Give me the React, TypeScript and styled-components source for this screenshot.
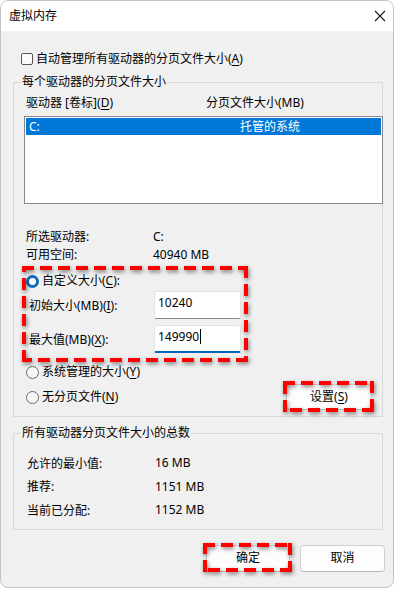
import React from 'react';
import styled, { createGlobalStyle } from 'styled-components';

const GlobalStyle = createGlobalStyle`
  html, body {
    margin: 0;
    padding: 0;
    background: #ffffff;
  }
  body {
    font-family: "Noto Sans", "Noto Sans CJK SC", sans-serif;
    font-size: 12px;
    color: #000000;
  }
`;

const Window = styled.div`
  width: 394px;
  height: 588px;
  box-sizing: border-box;
  border: 1px solid #c4c4c4;
  border-radius: 8px;
  overflow: hidden;
  background: #f0f0f0;
  display: flex;
  flex-direction: column;
`;

const TitleBar = styled.div`
  height: 30px;
  flex-shrink: 0;
  background: #ffffff;
  display: flex;
  align-items: center;
  justify-content: space-between;
  padding: 0 7px 0 8px;
`;

const Title = styled.span`
  font-size: 12px;
  line-height: 16px;
`;

const CloseIcon = styled.svg`
  display: block;
`;

const Content = styled.div`
  padding: 20px 10px 0 12px;
`;

const CheckRow = styled.div`
  display: flex;
  align-items: center;
  gap: 3px;
  height: 16px;
  padding-left: 8px;
  line-height: 16px;
`;

const CheckBox = styled.span`
  width: 12px;
  height: 12px;
  box-sizing: border-box;
  border: 1px solid #555555;
  border-radius: 2px;
  background: #fbfbfb;
`;

const Key = styled.span`
  text-decoration: underline;
  text-underline-offset: 2px;
`;

const Group = styled.fieldset<{ $top: number }>`
  margin: ${({ $top }) => $top}px 0 0 0;
  padding: 0;
  border: 1px solid #d9d9d9;
  min-width: 0;
`;

const Legend = styled.legend`
  margin-left: 7px;
  padding: 0 1px;
  line-height: 16px;
`;

const ColumnHeader = styled.div`
  display: grid;
  grid-template-columns: 180px 1fr;
  margin-top: 5px;
  padding-left: 12px;
  line-height: 16px;
`;

const ListBox = styled.div`
  margin: 5px -1px 0 10px;
  height: 88px;
  box-sizing: border-box;
  border: 1px solid #858991;
  background: #ffffff;
  padding: 1px;
`;

const ListRow = styled.div<{ $selected: boolean }>`
  display: grid;
  grid-template-columns: 211px 1fr;
  height: 17px;
  line-height: 17px;
  padding-left: 3px;
  background: ${({ $selected }) => ($selected ? '#0078d7' : 'transparent')};
  color: ${({ $selected }) => ($selected ? '#ffffff' : '#000000')};
`;

const InfoList = styled.div<{ $top: number; $left: number; $col: number; $row: number }>`
  margin-top: ${({ $top }) => $top}px;
  padding-left: ${({ $left }) => $left}px;
  display: grid;
  grid-template-columns: ${({ $col }) => $col}px 1fr;
  grid-auto-rows: ${({ $row }) => $row}px;
  align-items: center;
`;

const CustomSection = styled.div`
  position: relative;
  margin-top: 10px;
  padding-left: 12px;
`;

const RadioRow = styled.div<{ $top?: number }>`
  display: flex;
  align-items: center;
  gap: 3px;
  height: 16px;
  line-height: 16px;
  margin-top: ${({ $top }) => $top ?? 0}px;
`;

const Radio = styled.span<{ $checked?: boolean }>`
  width: 13px;
  height: 13px;
  box-sizing: border-box;
  border-radius: 50%;
  border: ${({ $checked }) => ($checked ? '3px solid #0f6cbd' : '1px solid #6b6b6b')};
  background: ${({ $checked }) => ($checked ? '#ffffff' : '#f6f6f6')};
`;

const FieldGrid = styled.div`
  display: grid;
  grid-template-columns: 125px 87px;
  row-gap: 6px;
  align-items: center;
  margin-top: 2px;
  padding-left: 3px;
`;

const TextBox = styled.div<{ $focused?: boolean }>`
  height: 28px;
  box-sizing: border-box;
  background: #ffffff;
  border: 1px solid #e3e3e3;
  border-bottom: ${({ $focused }) => ($focused ? '2px solid #0067c0' : '1px solid #8a8a8a')};
  border-radius: 2px;
  padding: 3px 3px 0;
  line-height: 16px;
  font-size: 12px;
`;

const Caret = styled.span`
  display: inline-block;
  width: 1px;
  height: 15px;
  background: #000000;
  vertical-align: -3px;
  margin-left: 1px;
`;

const LastRow = styled.div`
  display: flex;
  align-items: center;
  justify-content: space-between;
  margin-top: 4px;
  padding: 0 10px 6px 12px;
`;

const RadioLine = styled.div`
  display: flex;
  align-items: center;
  gap: 3px;
  line-height: 16px;
`;

const ButtonWrap = styled.div`
  position: relative;
`;

const Button = styled.div<{ $width: number; $height: number }>`
  width: ${({ $width }) => $width}px;
  height: ${({ $height }) => $height}px;
  box-sizing: border-box;
  display: flex;
  align-items: center;
  justify-content: center;
  background: #fdfdfd;
  border: 1px solid #d0d0d0;
  border-bottom-color: #b8b8b8;
  border-radius: 4px;
  line-height: 16px;
`;

const Footer = styled.div`
  display: flex;
  justify-content: flex-end;
  gap: 10px;
  margin: 15px -2px 0 0;
`;

const Frame = styled.svg<{ $left: number; $top: number }>`
  position: absolute;
  left: ${({ $left }) => $left}px;
  top: ${({ $top }) => $top}px;
  overflow: visible;
  pointer-events: none;
  filter: drop-shadow(1px 2px 2px rgba(0, 0, 0, 0.5));
`;

const DashedFrame: React.FC<{ left: number; top: number; w: number; h: number }> = ({ left, top, w, h }) => (
  <Frame $left={left} $top={top} width={w} height={h}>
    <g stroke="#ff0000" strokeWidth={4} strokeDasharray="12 6" fill="none">
      <path d={`M0 2H${w}`} />
      <path d={`M${w - 2} 0V${h}`} />
      <path d={`M${w} ${h - 2}H0`} />
      <path d={`M2 ${h}V0`} />
    </g>
  </Frame>
);

const totals = [
  { label: '允许的最小值:', value: '16 MB' },
  { label: '推荐:', value: '1151 MB' },
  { label: '当前已分配:', value: '1152 MB' },
];

export default function App() {
  return (
    <>
      <GlobalStyle />
      <Window>
        <TitleBar>
          <Title>虚拟内存</Title>
          <CloseIcon width="12" height="12" viewBox="0 0 12 12">
            <path d="M1 1L11 11M11 1L1 11" stroke="#1b1b1b" strokeWidth="1.1" fill="none" />
          </CloseIcon>
        </TitleBar>
        <Content>
          <CheckRow>
            <CheckBox />
            <span>
              自动管理所有驱动器的分页文件大小(<Key>A</Key>)
            </span>
          </CheckRow>

          <Group $top={7}>
            <Legend>每个驱动器的分页文件大小</Legend>
            <ColumnHeader>
              <span>
                驱动器 [卷标](<Key>D</Key>)
              </span>
              <span>分页文件大小(MB)</span>
            </ColumnHeader>
            <ListBox>
              <ListRow $selected>
                <span>C:</span>
                <span>托管的系统</span>
              </ListRow>
            </ListBox>

            <InfoList $top={23} $left={12} $col={127} $row={18}>
              <span>所选驱动器:</span>
              <span>C:</span>
              <span>可用空间:</span>
              <span>40940 MB</span>
            </InfoList>

            <CustomSection>
              <RadioRow>
                <Radio $checked />
                <span>
                  自定义大小(<Key>C</Key>):
                </span>
              </RadioRow>
              <FieldGrid>
                <span>
                  初始大小(MB)(<Key>I</Key>):
                </span>
                <TextBox>10240</TextBox>
                <span>
                  最大值(MB)(<Key>X</Key>):
                </span>
                <TextBox $focused>
                  149990
                  <Caret />
                </TextBox>
              </FieldGrid>
              <DashedFrame left={8} top={-7} w={226} h={96} />
              <RadioRow $top={11}>
                <Radio />
                <span>
                  系统管理的大小(<Key>Y</Key>)
                </span>
              </RadioRow>
            </CustomSection>

            <LastRow>
              <RadioLine>
                <Radio />
                <span>
                  无分页文件(<Key>N</Key>)
                </span>
              </RadioLine>
              <ButtonWrap>
                <Button $width={86} $height={26}>
                  <span>
                    设置(<Key>S</Key>)
                  </span>
                </Button>
                <DashedFrame left={-3} top={-3} w={91} h={31} />
              </ButtonWrap>
            </LastRow>
          </Group>

          <Group $top={8}>
            <Legend>所有驱动器分页文件大小的总数</Legend>
            <InfoList $top={10} $left={13} $col={128} $row={23.5}>
              {totals.map((t) => (
                <React.Fragment key={t.label}>
                  <span>{t.label}</span>
                  <span>{t.value}</span>
                </React.Fragment>
              ))}
            </InfoList>
            <div style={{ height: 7 }} />
          </Group>

          <Footer>
            <ButtonWrap>
              <Button $width={84} $height={27}>确定</Button>
              <DashedFrame left={-3} top={-2} w={89} h={29} />
            </ButtonWrap>
            <Button $width={85} $height={27}>取消</Button>
          </Footer>
        </Content>
      </Window>
    </>
  );
}
